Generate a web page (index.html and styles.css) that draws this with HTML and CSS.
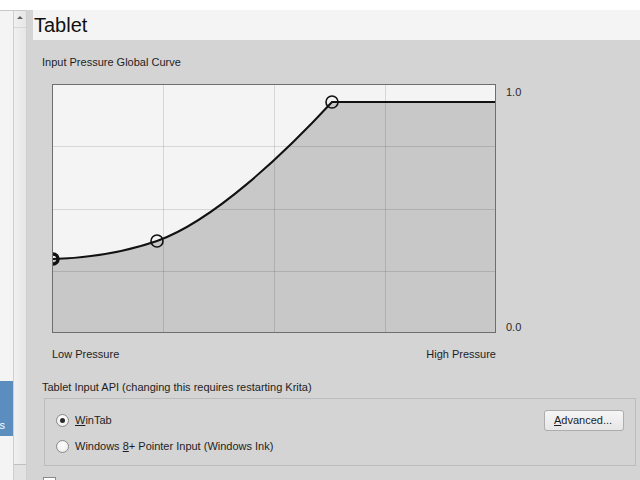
FILE: index.html
```html
<!DOCTYPE html>
<html>
<head>
<meta charset="utf-8">
<link rel="stylesheet" href="styles.css">
</head>
<body>
<div class="topstrip"></div>
<div class="app">
  <div class="sidebar">
    <div class="list">
      <div class="list-item-sel"><span class="sel-text">Tablet Settings</span></div>
    </div>
    <div class="scrollbar">
      <div class="sb-up"><span class="tri-up"></span></div>
      <div class="sb-track"></div>
      <div class="sb-down"></div>
    </div>
    <div class="gap"></div>
  </div>
  <div class="main">
    <div class="header">Tablet</div>
    <div class="content">
      <div class="label">Input Pressure Global Curve</div>
      <div class="curve-row">
        <div class="graph">
          <svg width="442" height="247" viewBox="0 0 442 247">
            <rect x="0" y="0" width="442" height="247" fill="#f4f4f4"/>
            <path d="M0,174 C40,173 72,167 104,156 C160,136 230,70 279,17 L442,17 L442,247 L0,247 Z" fill="#c8c8c8"/>
            <g stroke="rgba(0,0,0,0.12)" stroke-width="1">
              <line x1="110.5" y1="0" x2="110.5" y2="247"/>
              <line x1="221.5" y1="0" x2="221.5" y2="247"/>
              <line x1="332.5" y1="0" x2="332.5" y2="247"/>
              <line x1="0" y1="61.5" x2="442" y2="61.5"/>
              <line x1="0" y1="124.5" x2="442" y2="124.5"/>
              <line x1="0" y1="186.5" x2="442" y2="186.5"/>
            </g>
            <path d="M0,174 C40,173 72,167 104,156 C160,136 230,70 279,17 L442,17" fill="none" stroke="#111" stroke-width="2"/>
            <circle cx="0" cy="174" r="5" fill="none" stroke="#111" stroke-width="3.5"/>
            <circle cx="104" cy="156" r="6" fill="none" stroke="#111" stroke-width="1.6"/>
            <circle cx="279" cy="17" r="6" fill="none" stroke="#111" stroke-width="1.6"/>
          </svg>
        </div>
        <div class="axis">
          <span>1.0</span>
          <span>0.0</span>
        </div>
      </div>
      <div class="pressure-row">
        <span>Low Pressure</span>
        <span>High Pressure</span>
      </div>
      <div class="label api-label">Tablet Input API (changing this requires restarting Krita)</div>
      <div class="groupbox">
        <div class="gb-row">
          <label class="radio"><span class="radio-dot checked"></span><span><u>W</u>inTab</span></label>
          <button class="btn"><u>A</u>dvanced...</button>
        </div>
        <div class="gb-row">
          <label class="radio"><span class="radio-dot"></span><span>Windows <u>8</u>+ Pointer Input (Windows Ink)</span></label>
        </div>
      </div>
      <div class="check-row">
        <span class="checkbox"></span>
        <span>Use mouse events for right- and middle-clicks (workaround for convertibles, changing requires restart)</span>
      </div>
    </div>
  </div>
</div>
</body>
</html>
```
FILE: styles.css
```css
html, body {
  margin: 0;
  padding: 0;
  width: 640px;
  height: 480px;
  overflow: hidden;
  background: #ffffff;
  font-family: "Liberation Sans", Arial, sans-serif;
  font-size: 11px;
  color: #1e1e1e;
}
.topstrip {
  height: 10px;
  background: #ffffff;
}
.app {
  display: flex;
  height: 470px;
}
.sidebar {
  display: flex;
  width: 33px;
  flex: none;
}
.list {
  width: 13px;
  background: #f4f4f4;
  border-top: 1px solid #c8c8c8;
  box-sizing: border-box;
  overflow: hidden;
}
.list-item-sel {
  margin-top: 370px;
  height: 55px;
  background: #5b8dbe;
  color: #ffffff;
  line-height: 14px;
  display: flex;
  align-items: flex-end;
  justify-content: flex-end;
  padding-bottom: 4px;
  box-sizing: border-box;
  overflow: hidden;
  white-space: nowrap;
}
.sel-text {
  margin-right: 8px;
}
.scrollbar {
  width: 14px;
  box-sizing: border-box;
  border-left: 1px solid #cfcfcf;
  border-right: 1px solid #cfcfcf;
  background: linear-gradient(to right, #f0f0f0, #e6e6e6);
  display: flex;
  flex-direction: column;
}
.sb-up {
  height: 16px;
  border-top: 1px solid #c8c8c8;
  border-bottom: 1px solid #d6d6d6;
  display: flex;
  align-items: center;
  justify-content: center;
}
.tri-up {
  width: 0;
  height: 0;
  border-left: 3px solid transparent;
  border-right: 3px solid transparent;
  border-bottom: 3px solid #606060;
  margin-top: -4px;
}
.sb-track {
  flex: 1;
}
.sb-down {
  height: 15px;
  border-top: 1px solid #c0c0c0;
  background: #e2e2e2;
}
.gap {
  width: 6px;
  background: #d4d4d4;
}
.main {
  flex: 1;
  display: flex;
  flex-direction: column;
  min-width: 0;
}
.header {
  height: 30px;
  background: #f4f4f4;
  font-size: 20px;
  line-height: 30px;
  padding-left: 1px;
  color: #111;
}
.content {
  flex: 1;
  background: #d4d4d4;
  padding: 14px 4px 0 9px;
  display: flex;
  flex-direction: column;
  min-height: 0;
}
.label {
  line-height: 16px;
  height: 16px;
  white-space: nowrap;
}
.curve-row {
  display: flex;
  margin-top: 14px;
  margin-left: 10px;
}
.graph {
  width: 442px;
  height: 247px;
  border: 1px solid #6e6e6e;
}
.graph svg {
  display: block;
}
.axis {
  margin-left: 10px;
  display: flex;
  flex-direction: column;
  justify-content: space-between;
  line-height: 16px;
  color: #2a2a2a;
  margin-bottom: -2px;
}
.pressure-row {
  width: 444px;
  margin-left: 10px;
  margin-top: 13px;
  display: flex;
  justify-content: space-between;
  line-height: 16px;
}
.api-label {
  margin-top: 17px;
}
.groupbox {
  margin-top: 3px;
  margin-left: 2px;
  height: 68px;
  flex: none;
  box-sizing: border-box;
  border: 1px solid #bcbcbc;
  padding: 13px 11px 0 11px;
  display: flex;
  flex-direction: column;
  gap: 10px;
}
.gb-row {
  height: 16px;
  display: flex;
  align-items: center;
  justify-content: space-between;
}
.radio {
  display: flex;
  align-items: center;
  gap: 6px;
  line-height: 16px;
  white-space: nowrap;
}
.radio-dot {
  width: 13px;
  height: 13px;
  box-sizing: border-box;
  border-radius: 50%;
  border: 1px solid #8a8a8a;
  background: radial-gradient(circle at 50% 40%, #ffffff, #e8e8e8);
  display: flex;
  align-items: center;
  justify-content: center;
}
.radio-dot.checked::after {
  content: "";
  width: 5px;
  height: 5px;
  border-radius: 50%;
  background: #2a2a2a;
}
.btn {
  width: 80px;
  height: 21px;
  box-sizing: border-box;
  border: 1px solid #adadad;
  border-radius: 3px;
  background: linear-gradient(#f6f6f6, #e6e6e6);
  font-family: inherit;
  font-size: 11px;
  color: #1e1e1e;
  padding: 0 0 0 9px;
  text-align: left;
  line-height: 19px;
}
.check-row {
  margin-top: 10px;
  display: flex;
  align-items: flex-start;
  gap: 6px;
  white-space: nowrap;
  line-height: 16px;
  margin-left: 1px;
  flex: none;
}
.checkbox {
  width: 13px;
  height: 13px;
  box-sizing: border-box;
  border: 1px solid #8a8a8a;
  background: #ffffff;
  flex: none;
  margin-top: 1px;
}
```
